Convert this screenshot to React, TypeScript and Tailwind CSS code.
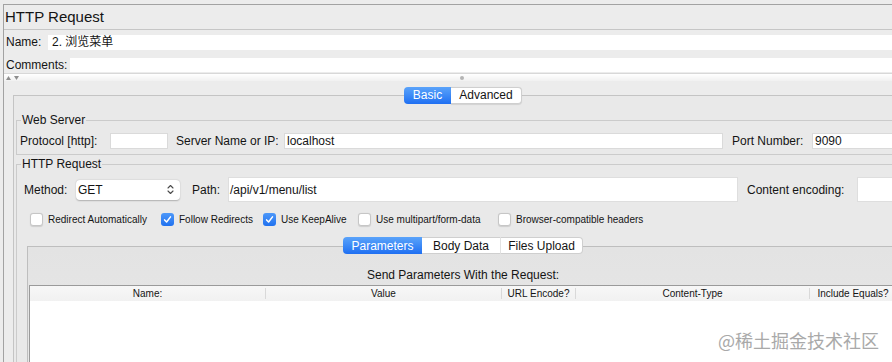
import React from "react";

function Checkbox({ checked }: { checked?: boolean }) {
  return checked ? (
    <span className="flex h-[13px] w-[13px] shrink-0 items-center justify-center rounded-[3px] bg-gradient-to-b from-[#4d98f9] to-[#1f71ef]">
      <svg width="9" height="9" viewBox="0 0 9 9">
        <path d="M1.6 4.9 L3.6 7 L7.5 1.9" fill="none" stroke="white" strokeWidth="1.5" strokeLinecap="round" strokeLinejoin="round" />
      </svg>
    </span>
  ) : (
    <span className="h-[13px] w-[13px] shrink-0 rounded-[3px] border border-[#c6c6c6] bg-white shadow-[0_0.5px_1px_rgba(0,0,0,0.12)]" />
  );
}

function CheckItem({ w, checked, label }: { w: string; checked?: boolean; label: string }) {
  return (
    <div className={`flex shrink-0 items-center ${w}`}>
      <Checkbox checked={checked} />
      <span className="ml-[5px] whitespace-nowrap text-[10px] leading-[13px]">{label}</span>
    </div>
  );
}

export default function App() {
  return (
    <div className="relative h-[362px] w-[892px] overflow-hidden bg-[#ececec] pl-[3px] pt-[4px] font-['Liberation_Sans','Noto_Sans_CJK_SC',sans-serif] text-[#141414]">
      <div className="flex h-[420px] w-[1000px] flex-col border-l border-t border-[#a2a2a2]">
        {/* Title */}
        <div className="h-[25px] shrink-0 border-b border-[#c6c6c6] pl-[1px] text-[15px] leading-[24px]">HTTP Request</div>

        {/* Name */}
        <div className="flex h-[23px] shrink-0 items-start pl-[2px]">
          <span className="mt-[5px] w-[42px] shrink-0 text-[12px] leading-[15px]">Name:</span>
          <div className="mt-[5px] h-[15px] flex-1 bg-white pl-[4px] text-[12px] leading-[15px]">2. 浏览菜单</div>
        </div>

        {/* Comments */}
        <div className="flex h-[20px] shrink-0 items-start pl-[2px]">
          <span className="mt-[5px] w-[64px] shrink-0 text-[12px] leading-[15px]">Comments:</span>
          <div className="mt-[5px] h-[14px] flex-1 bg-white" />
        </div>

        {/* Split divider */}
        <div className="flex h-[8px] shrink-0 items-center border-t border-[#d8d8d8] bg-gradient-to-b from-white to-[#f1f1f1]">
          <div className="flex w-[456px] shrink-0 items-center gap-[3px] pl-[2px]">
            <svg width="5" height="4" viewBox="0 0 5 4"><path d="M2.5 0 L5 4 L0 4 Z" fill="#8e8e8e" /></svg>
            <svg width="5" height="4" viewBox="0 0 5 4"><path d="M0 0 L5 0 L2.5 4 Z" fill="#8e8e8e" /></svg>
          </div>
          <span className="h-[4px] w-[4px] rounded-full bg-[#b4b4b4]" />
        </div>

        {/* Basic / Advanced tabbed pane */}
        <div className="flex flex-1 flex-col pl-[9px]">
          <div className="relative z-10 mt-[6px] flex h-[17px] shrink-0 pl-[391px]">
            <div className="flex h-[17px] w-[47px] items-center justify-center rounded-l-[4px] bg-gradient-to-b from-[#5aa3fa] to-[#1f6ff2] text-[12px] leading-[17px] text-white">Basic</div>
            <div className="flex h-[17px] w-[71px] items-center justify-center rounded-r-[4px] border border-l-0 border-[#cfcfcf] bg-white text-[12px] leading-[15px] shadow-[0_0.5px_1px_rgba(0,0,0,0.1)]">Advanced</div>
          </div>
          <div className="-mt-[9px] flex flex-1 flex-col border-l border-t border-[#c4c4c4] bg-[#e9e9e9]">
            {/* Web Server */}
            <fieldset className="ml-[2px] mt-[17px] border-b border-l border-t border-[#cbcbcb]">
              <legend className="ml-[4px] px-[1px] text-[12px] leading-[14px]">Web Server</legend>
              <div className="flex items-center pb-[4px] pl-[3px] pt-[5px] text-[12px]">
                <span className="w-[90px] shrink-0 whitespace-nowrap">Protocol [http]:</span>
                <div className="h-[16px] w-[58px] shrink-0 border border-[#dadada] bg-white" />
                <span className="ml-[8px] w-[108px] shrink-0 whitespace-nowrap">Server Name or IP:</span>
                <div className="h-[16px] w-[439px] shrink-0 border border-[#dadada] bg-white pl-[2px] leading-[14px]">localhost</div>
                <span className="ml-[9px] w-[80px] shrink-0 whitespace-nowrap">Port Number:</span>
                <div className="h-[16px] w-[150px] shrink-0 border border-[#dadada] bg-white pl-[2px] leading-[14px]">9090</div>
              </div>
            </fieldset>

            {/* HTTP Request */}
            <fieldset className="ml-[2px] mt-[2px] flex-1 border-l border-t border-[#cbcbcb]">
              <legend className="ml-[4px] px-[1px] text-[12px] leading-[14px]">HTTP Request</legend>
              <div className="flex flex-col">
                <div className="mt-[6px] flex h-[25px] items-center pl-[7px] text-[12px]">
                  <span className="w-[52px] shrink-0">Method:</span>
                  <div className="flex h-[20px] w-[104px] shrink-0 items-center justify-between rounded-[4px] bg-white pl-[2px] pr-[6px] shadow-[0_0.5px_1.5px_rgba(0,0,0,0.25)]">
                    <span>GET</span>
                    <svg width="7" height="11" viewBox="0 0 7 11">
                      <path d="M1 4 L3.5 1.5 L6 4 M1 7 L3.5 9.5 L6 7" fill="none" stroke="#4a4a4a" strokeWidth="1.1" strokeLinecap="round" strokeLinejoin="round" />
                    </svg>
                  </div>
                  <span className="ml-[12px] w-[36px] shrink-0">Path:</span>
                  <div className="flex h-[25px] w-[510px] shrink-0 items-center border border-[#dedede] bg-white pl-[1px]">/api/v1/menu/list</div>
                  <span className="ml-[9px] w-[110px] shrink-0 whitespace-nowrap">Content encoding:</span>
                  <div className="h-[25px] w-[120px] shrink-0 border border-[#dedede] bg-white" />
                </div>

                <div className="mt-[11px] flex h-[13px] items-center pl-[13px]">
                  <CheckItem w="w-[131px]" label="Redirect Automatically" />
                  <CheckItem w="w-[102px]" checked label="Follow Redirects" />
                  <CheckItem w="w-[95px]" checked label="Use KeepAlive" />
                  <CheckItem w="w-[140px]" label="Use multipart/form-data" />
                  <CheckItem w="w-[200px]" label="Browser-compatible headers" />
                </div>

                {/* Parameters tabs */}
                <div className="relative z-10 mt-[11px] flex h-[17px] pl-[326px] text-[12px]">
                  <div className="flex h-[17px] w-[79px] items-center justify-center rounded-l-[4px] bg-gradient-to-b from-[#5aa3fa] to-[#1f6ff2] text-white">Parameters</div>
                  <div className="flex h-[17px] w-[78px] items-center justify-center border-y border-[#cfcfcf] bg-white">Body Data</div>
                  <div className="flex h-[17px] w-[83px] items-center justify-center rounded-r-[4px] border border-l-[#e2e2e2] border-[#cfcfcf] bg-white">Files Upload</div>
                </div>
                <div className="-mt-[8px] ml-[10px] flex h-[200px] flex-col border-l border-t border-[#bebebe] bg-gradient-to-b from-[#e3e3e3] to-[#ebebeb]">
                  <div className="pl-[339px] pt-[21px] text-[12px] leading-[14px]">Send Parameters With the Request:</div>
                  <div className="ml-[1px] mt-[3px] flex flex-1 flex-col border-l border-t border-[#9a9a9a] bg-white">
                    <div className="flex h-[15px] items-center bg-gradient-to-b from-[#f7f7f7] to-[#f1f1f1] text-[10px] leading-[15px]">
                      <span className="w-[235px] shrink-0 text-center">Name:</span>
                      <span className="h-[11px] w-px shrink-0 bg-[#d9d9d9]" />
                      <span className="w-[235px] shrink-0 text-center">Value</span>
                      <span className="h-[11px] w-px shrink-0 bg-[#d9d9d9]" />
                      <span className="w-[73px] shrink-0 text-center">URL Encode?</span>
                      <span className="h-[11px] w-px shrink-0 bg-[#d9d9d9]" />
                      <span className="w-[233px] shrink-0 text-center">Content-Type</span>
                      <span className="h-[11px] w-px shrink-0 bg-[#d9d9d9]" />
                      <span className="w-[86px] shrink-0 whitespace-nowrap text-center">Include Equals?</span>
                    </div>
                    <div className="flex-1 bg-white" />
                  </div>
                </div>
              </div>
            </fieldset>
          </div>
        </div>
      </div>

      <div className="absolute left-[718px] top-[329px] font-['Noto_Sans_CJK_SC',sans-serif] text-[18px] leading-[22px] text-[#a9a9a9]">
        @稀土掘金技术社区
      </div>
    </div>
  );
}
